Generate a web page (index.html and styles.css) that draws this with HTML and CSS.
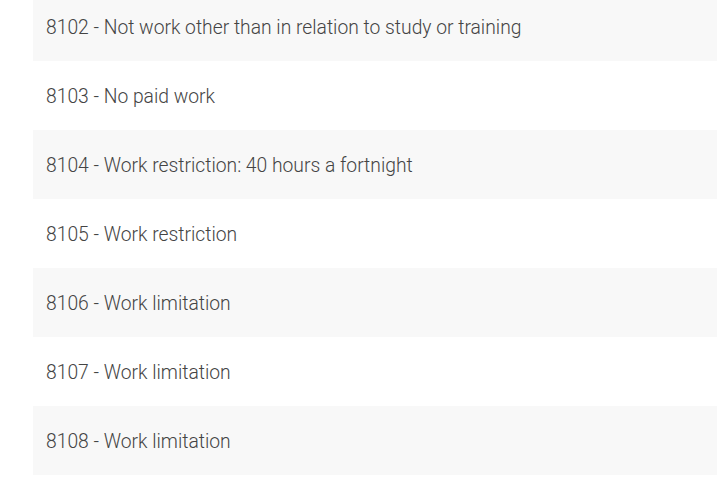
FILE: index.html
```html
<!DOCTYPE html>
<html>
<head>
<meta charset="utf-8">
<link rel="stylesheet" href="styles.css">
</head>
<body>
<ul class="conditions">
  <li class="row alt">8102 - Not work other than in relation to study or training</li>
  <li class="row">8103 - No paid work</li>
  <li class="row alt">8104 - Work restriction: 40 hours a fortnight</li>
  <li class="row">8105 - Work restriction</li>
  <li class="row alt">8106 - Work limitation</li>
  <li class="row">8107 - Work limitation</li>
  <li class="row alt">8108 - Work limitation</li>
</ul>
</body>
</html>
```
FILE: styles.css
```css
html, body {
  margin: 0;
  padding: 0;
  background: #fff;
  overflow: hidden;
}
.conditions {
  list-style: none;
  margin: -8px 0 0 33px;
  padding: 0;
}
.row {
  box-sizing: border-box;
  height: 69px;
  display: flex;
  align-items: center;
  padding: 2px 0 0 13px;
  font-family: Roboto, "Liberation Sans", sans-serif;
  font-weight: 300;
  font-size: 19.3px;
  color: #444;
}
.alt {
  background: #f8f8f8;
}
```
